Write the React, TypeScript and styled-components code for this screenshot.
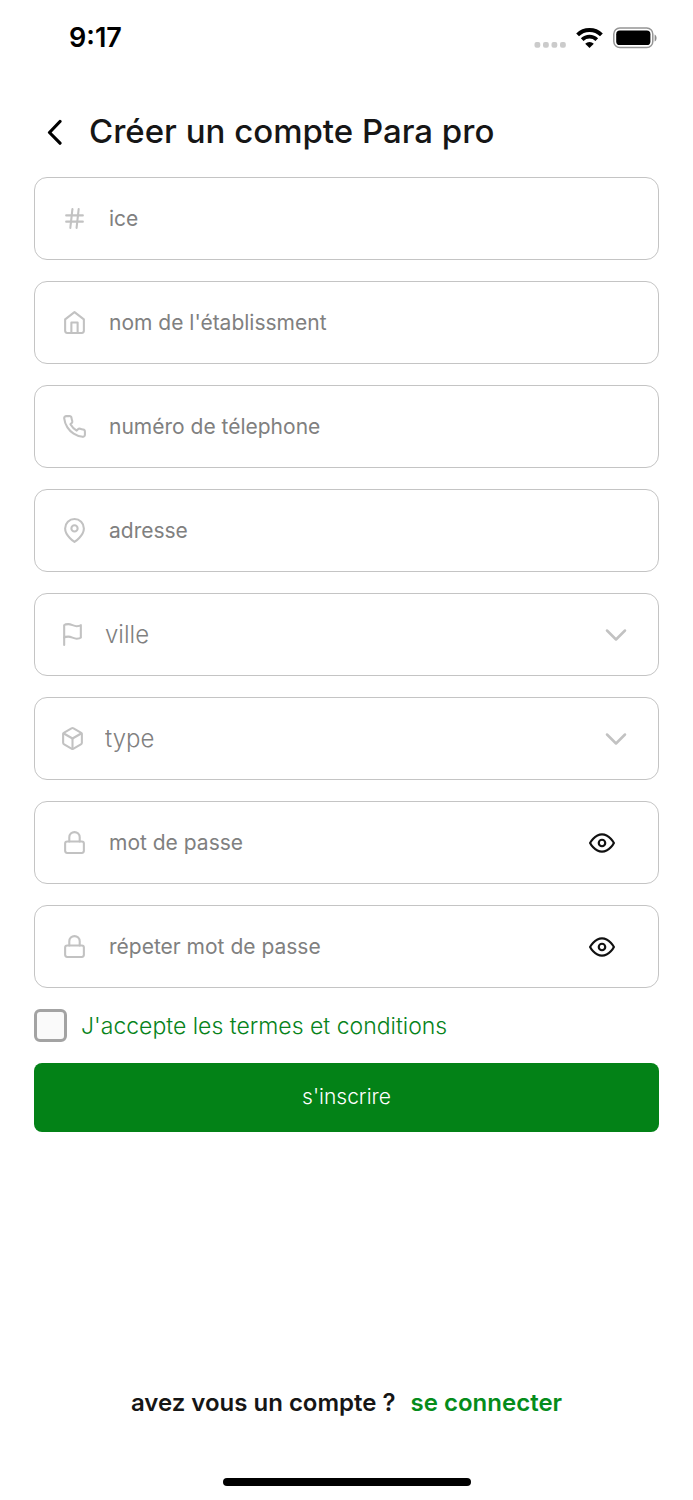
import React, { useState } from "react";
import styled, { createGlobalStyle } from "styled-components";
import {
  FiBox,
  FiChevronDown,
  FiEye,
  FiFlag,
  FiHash,
  FiHome,
  FiLock,
  FiMapPin,
  FiPhone,
} from "react-icons/fi";
import type { IconType } from "react-icons";

const GlobalStyle = createGlobalStyle`
  *, *::before, *::after { box-sizing: border-box; }
  body {
    margin: 0;
    background: #fff;
    font-family: Inter, "Liberation Sans", sans-serif;
    color: #161616;
  }
  button, input, select { font: inherit; }
`;

const Screen = styled.div`
  display: flex;
  flex-direction: column;
  min-height: 100vh;
`;

const StatusBar = styled.div`
  display: flex;
  align-items: center;
  justify-content: space-between;
  height: 76px;
  padding: 0 36px 0 69px;
  color: #000;
`;

const Clock = styled.time`
  font-size: 27px;
  font-weight: 600;
  line-height: 32px;
`;

const StatusIcons = styled.div`
  display: flex;
  align-items: center;
  gap: 10px;
`;

const Header = styled.header`
  display: flex;
  align-items: center;
  gap: 26px;
  height: 90px;
  margin: 10px 34px 1px;
  padding-left: 12px;
`;

const BackButton = styled.button`
  display: flex;
  padding: 0;
  border: 0;
  background: none;
  color: #000;
`;

const Title = styled.h1`
  margin: 0;
  font-size: 33px;
  font-weight: 500;
  line-height: 40px;
`;

const Form = styled.form`
  display: flex;
  flex-direction: column;
  gap: 21px;
  padding: 0 34px;
`;

const Field = styled.label<{ $select?: boolean }>`
  display: flex;
  align-items: center;
  gap: ${(p) => (p.$select ? 20 : 22)}px;
  height: 83px;
  padding: 0 ${(p) => (p.$select ? 24 : 43)}px 0 ${(p) => (p.$select ? 25 : 27)}px;
  border: 1px solid #c4c4c4;
  border-radius: 13px;
  color: #c2c2c2;

  & > svg { flex: none; }
`;

const TextInput = styled.input`
  flex: 1;
  min-width: 0;
  height: 48px;
  padding: 0;
  border: 0;
  outline: 0;
  background: none;
  color: #161616;
  font-size: 21px;

  &::placeholder { color: #808080; opacity: 1; }
`;

const SelectInput = styled.select`
  flex: 1;
  min-width: 0;
  height: 48px;
  padding: 0;
  border: 0;
  outline: 0;
  appearance: none;
  background: none;
  color: #808080;
  font-size: 24px;
  font-weight: 300;
`;

const EyeButton = styled.button`
  display: flex;
  padding: 0;
  border: 0;
  background: none;
  color: #111;
`;

const Terms = styled.label`
  display: flex;
  align-items: center;
  gap: 14px;
  color: #07831b;
  font-size: 23px;
  font-weight: 300;
  line-height: 32px;
`;

const Checkbox = styled.input`
  flex: none;
  appearance: none;
  width: 33px;
  height: 33px;
  margin: 0;
  border: 3px solid #a3a3a3;
  border-radius: 6px;
  background: #fafafa;

  &:checked { background: #038217; }
`;

const SubmitButton = styled.button`
  height: 69px;
  padding: 0 0 3px;
  border: 0;
  border-radius: 8px;
  background: #038217;
  color: #fff;
  font-size: 21px;
  font-weight: 300;
`;

const Footer = styled.footer`
  display: flex;
  justify-content: center;
  gap: 15px;
  margin-top: auto;
  padding: 0 34px;
  font-size: 24px;
  font-weight: 600;
  line-height: 32px;
`;

const LoginLink = styled.a`
  color: #058c1b;
  text-decoration: none;
`;

const HomeIndicator = styled.div`
  width: 248px;
  height: 8px;
  margin: 59px auto 14px;
  border-radius: 4px;
  background: #000;
`;

const DotsIcon = () => (
  <svg width="32" height="20" viewBox="0 0 32 20" fill="#cbcbcb" aria-hidden="true">
    <rect x="0.5" y="14" width="5.8" height="5.8" rx="2" />
    <rect x="9" y="14" width="5.8" height="5.8" rx="2" />
    <rect x="17.5" y="14" width="5.8" height="5.8" rx="2" />
    <rect x="26" y="14" width="5.8" height="5.8" rx="2" />
  </svg>
);

const WifiIcon = () => (
  <svg width="27" height="20" viewBox="0 0 27 20" fill="none" stroke="#000" aria-hidden="true">
    <path d="M1.6 6.9a17 17 0 0 1 23.8 0" strokeWidth="4" />
    <path d="M6.2 11.7a10.4 10.4 0 0 1 14.6 0" strokeWidth="3.8" />
    <path d="M13.5 20 9.2 15.7a6.1 6.1 0 0 1 8.6 0z" fill="#000" stroke="none" />
  </svg>
);

const BatteryIcon = () => (
  <svg width="44" height="22" viewBox="0 0 44 22" aria-hidden="true">
    <rect x="0.8" y="1" width="39" height="19.6" rx="6" fill="none" stroke="#959595" strokeWidth="1.5" />
    <rect x="3.2" y="3.6" width="34.2" height="14.4" rx="3.6" fill="#000" />
    <path d="M41.6 7.4c2.6 1 2.6 6 0 7z" fill="#8d8d8d" />
  </svg>
);

const BackIcon = () => (
  <svg width="17" height="28" viewBox="0 0 17 28" fill="none" stroke="currentColor" strokeWidth="3.2" strokeLinecap="round" strokeLinejoin="round" aria-hidden="true">
    <path d="M14 4.5 3.5 15.5 14 26.2" />
  </svg>
);

function FieldIcon({ icon: Icon }: { icon: IconType }) {
  return <Icon size={25} aria-hidden="true" />;
}

function TextField({ icon, label, type = "text" }: { icon: IconType; label: string; type?: string }) {
  return (
    <Field>
      <FieldIcon icon={icon} />
      <TextInput type={type} placeholder={label} aria-label={label} />
    </Field>
  );
}

function SelectField({ icon, label, options }: { icon: IconType; label: string; options: string[] }) {
  return (
    <Field $select>
      <FieldIcon icon={icon} />
      <SelectInput aria-label={label} defaultValue="">
        <option value="" disabled hidden>{label}</option>
        {options.map((o) => <option key={o}>{o}</option>)}
      </SelectInput>
      <FiChevronDown size={36} strokeWidth={1.7} aria-hidden="true" />
    </Field>
  );
}

function PasswordField({ label }: { label: string }) {
  const [visible, setVisible] = useState(false);
  return (
    <Field>
      <FieldIcon icon={FiLock} />
      <TextInput type={visible ? "text" : "password"} placeholder={label} aria-label={label} />
      <EyeButton type="button" aria-label="afficher" onClick={() => setVisible(!visible)}>
        <FiEye size={26} aria-hidden="true" />
      </EyeButton>
    </Field>
  );
}

export default function App() {
  return (
    <Screen>
      <GlobalStyle />
      <StatusBar>
        <Clock>9:17</Clock>
        <StatusIcons>
          <DotsIcon />
          <WifiIcon />
          <BatteryIcon />
        </StatusIcons>
      </StatusBar>
      <Header>
        <BackButton type="button" aria-label="retour">
          <BackIcon />
        </BackButton>
        <Title>Créer un compte Para pro</Title>
      </Header>
      <Form onSubmit={(e) => e.preventDefault()}>
        <TextField icon={FiHash} label="ice" />
        <TextField icon={FiHome} label="nom de l'établissment" />
        <TextField icon={FiPhone} label="numéro de télephone" type="tel" />
        <TextField icon={FiMapPin} label="adresse" />
        <SelectField icon={FiFlag} label="ville" options={["Casablanca", "Rabat"]} />
        <SelectField icon={FiBox} label="type" options={["Pharmacie", "Parapharmacie"]} />
        <PasswordField label="mot de passe" />
        <PasswordField label="répeter mot de passe" />
        <Terms>
          <Checkbox type="checkbox" />
          J'accepte les termes et conditions
        </Terms>
        <SubmitButton type="submit">s'inscrire</SubmitButton>
      </Form>
      <Footer>
        <span>avez vous un compte ?</span>
        <LoginLink href="#connexion">se connecter</LoginLink>
      </Footer>
      <HomeIndicator />
    </Screen>
  );
}
